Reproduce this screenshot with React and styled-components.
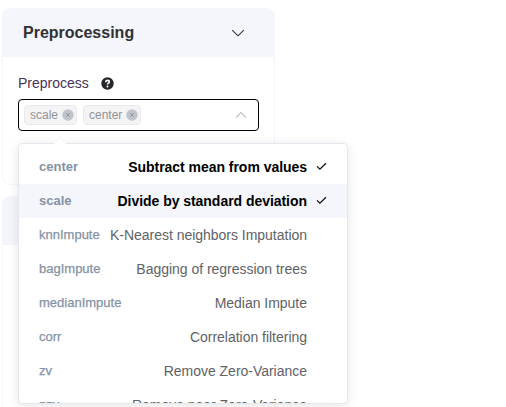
import React from "react";
import styled, { createGlobalStyle } from "styled-components";

const GlobalStyle = createGlobalStyle`
  * { box-sizing: border-box; }
  body {
    margin: 0;
    background: #fff;
    font-family: "Liberation Sans", Arial, sans-serif;
    overflow: hidden;
  }
`;

const Page = styled.main`
  display: flex;
  flex-direction: column;
  gap: 11px;
  height: 407px;
  padding: 8px 0 0 2px;
  overflow: hidden;
`;

const Card = styled.section`
  flex: none;
  width: 273px;
  height: ${({ $height }) => $height}px;
  border: 1px solid #f4f5fa;
  border-radius: 9px;
  background: #fff;
`;

const CardHeader = styled.header`
  display: flex;
  align-items: center;
  justify-content: space-between;
  height: 49px;
  margin: -1px -1px 0;
  padding: 0 30px 0 21px;
  border-radius: 9px 9px 0 0;
  background: #f5f6fb;
`;

const Title = styled.h2`
  margin: 0;
  font-size: 16px;
  line-height: 20px;
  color: #303133;
`;

const Field = styled.div`
  position: relative;
  padding: 16px 15px 0;
`;

const Label = styled.label`
  display: flex;
  align-items: center;
  gap: 12.5px;
  height: 20px;
  font-size: 14px;
  color: #46325a;
`;

const Select = styled.div`
  display: flex;
  align-items: center;
  gap: 6px;
  width: 241px;
  height: 32px;
  margin-top: 6px;
  padding: 0 11px 0 5px;
  border: 1px solid #000;
  border-radius: 4px;
`;

const Tag = styled.span`
  display: flex;
  align-items: center;
  gap: 4px;
  height: 20px;
  padding: 0 2px 0 5px;
  border: 1px solid #e9e9eb;
  border-radius: 4px;
  background: #f4f4f5;
  color: #909399;
  font-size: 12px;
  line-height: 18px;
`;

const Caret = styled.svg`
  margin-left: auto;
`;

const Dropdown = styled.div`
  position: absolute;
  top: 86px;
  left: 15px;
  z-index: 2;
  width: 330px;
  height: 261px;
  border: 1px solid #e4e7ed;
  border-radius: 4px;
  background: #fff;
  box-shadow: 0 2px 12px rgba(0, 0, 0, 0.1);
`;

const Arrow = styled.svg`
  position: absolute;
  top: -6px;
  left: 35px;
`;

const Options = styled.ul`
  height: 259px;
  margin: 0;
  padding: 6px 0;
  overflow: hidden;
  list-style: none;
`;

const Option = styled.li`
  display: flex;
  align-items: center;
  height: 34px;
  padding: 0 20px;
  font-size: 14px;
  font-weight: ${({ $selected }) => ($selected ? 700 : 400)};
  color: ${({ $selected }) => ($selected ? "#000" : "#606266")};
  background: ${({ $hover }) => ($hover ? "#f5f6fb" : "transparent")};
  white-space: nowrap;
`;

const Code = styled.span`
  padding-bottom: 2px;
  font-size: 13px;
  color: #8492a6;
  -webkit-text-stroke: ${({ $selected }) => ($selected ? "0" : "0.25px #8492a6")};
`;

const Description = styled.span`
  margin-left: auto;
  letter-spacing: ${({ $selected }) => ($selected ? "-0.04px" : "-0.02px")};
`;

const CheckSlot = styled.span`
  display: flex;
  flex: none;
  width: 20px;
  padding: 0 0 1px 9px;
`;

const options = [
  { code: "center", text: "Subtract mean from values", selected: true },
  { code: "scale", text: "Divide by standard deviation", selected: true, hover: true },
  { code: "knnImpute", text: "K-Nearest neighbors Imputation" },
  { code: "bagImpute", text: "Bagging of regression trees" },
  { code: "medianImpute", text: "Median Impute" },
  { code: "corr", text: "Correlation filtering" },
  { code: "zv", text: "Remove Zero-Variance" },
  { code: "nzv", text: "Remove near Zero-Variance" },
];

function ChevronDown() {
  return (
    <svg width="14" height="8" viewBox="0 0 14 8" fill="none" stroke="#303133" strokeWidth="1.1">
      <path d="M1.2 1.2 7 6.8l5.8-5.6" />
    </svg>
  );
}

function HelpIcon() {
  return (
    <svg width="13" height="13" viewBox="0 0 13 13" fill="none">
      <circle cx="6.5" cy="6.5" r="6.2" fill="#25282b" />
      <path d="M4.6 5.2C4.7 4 5.5 3.4 6.5 3.4s1.8.6 1.8 1.5c0 1.3-1.8 1.2-1.8 2.5" stroke="#fff" strokeWidth="1.6" />
      <circle cx="6.5" cy="9.4" r="1" fill="#fff" />
    </svg>
  );
}

function CloseIcon() {
  return (
    <svg width="12" height="12" viewBox="0 0 12 12" fill="none">
      <circle cx="6" cy="6" r="5.8" fill="#c0c4cc" />
      <path d="m4 4 4 4m0-4L4 8" stroke="#909399" strokeWidth=".9" />
    </svg>
  );
}

function CheckIcon() {
  return (
    <svg width="11" height="9" viewBox="0 0 11 9" fill="none" stroke="#111" strokeWidth="1.3">
      <path d="m1 4.4 2.9 2.8L10 1.2" />
    </svg>
  );
}

export default function App() {
  return (
    <>
      <GlobalStyle />
      <Page>
        <Card $height={177}>
          <CardHeader>
            <Title>Preprocessing</Title>
            <ChevronDown />
          </CardHeader>
          <Field>
            <Label>
              Preprocess
              <HelpIcon />
            </Label>
            <Select>
              {["scale", "center"].map((name) => (
                <Tag key={name}>
                  {name}
                  <CloseIcon />
                </Tag>
              ))}
              <Caret width="12" height="8" viewBox="0 0 12 8" fill="none" stroke="#c0c4cc" strokeWidth="1.2">
                <path d="m1 6.5 5-5 5 5" />
              </Caret>
            </Select>
            <Dropdown>
              <Arrow width="12" height="7" viewBox="0 0 12 7">
                <path d="M0 6 6 0l6 6" fill="#fff" stroke="#ebeef5" strokeWidth=".6" />
                <path d="M0 6h12v1H0z" fill="#fff" />
              </Arrow>
              <Options>
                {options.map(({ code, text, selected, hover }) => (
                  <Option key={code} $selected={selected} $hover={hover}>
                    <Code $selected={selected}>{code}</Code>
                    <Description $selected={selected}>{text}</Description>
                    <CheckSlot>{selected && <CheckIcon />}</CheckSlot>
                  </Option>
                ))}
              </Options>
            </Dropdown>
          </Field>
        </Card>
        <Card $height={230}>
          <CardHeader />
        </Card>
      </Page>
    </>
  );
}
